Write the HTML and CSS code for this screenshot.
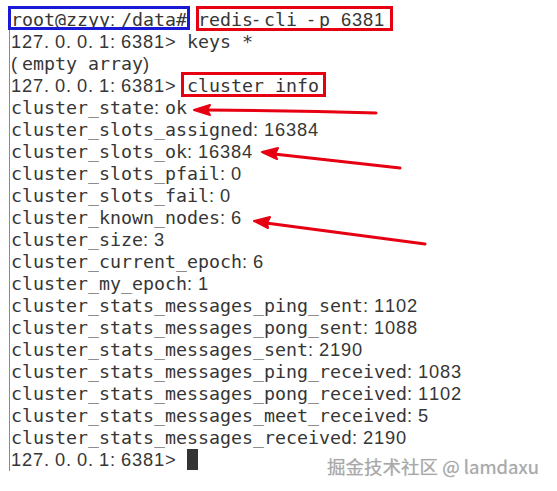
FILE: index.html
```html
<!DOCTYPE html>
<html lang="en">
<head>
<meta charset="utf-8">
<title>redis-cli cluster info</title>
<link rel="stylesheet" href="styles.css">
</head>
<body>
<div class="page">
  <div class="term">
    <div class="ln">root@zzyy:/data# redis-cli -p 6381</div>
    <div class="ln">127.0.0.1:6381&gt; keys *</div>
    <div class="ln">(empty array)</div>
    <div class="ln">127.0.0.1:6381&gt; cluster info</div>
    <div class="ln">cluster_state:ok</div>
    <div class="ln">cluster_slots_assigned:16384</div>
    <div class="ln">cluster_slots_ok:16384</div>
    <div class="ln">cluster_slots_pfail:0</div>
    <div class="ln">cluster_slots_fail:0</div>
    <div class="ln">cluster_known_nodes:6</div>
    <div class="ln">cluster_size:3</div>
    <div class="ln">cluster_current_epoch:6</div>
    <div class="ln">cluster_my_epoch:1</div>
    <div class="ln">cluster_stats_messages_ping_sent:1102</div>
    <div class="ln">cluster_stats_messages_pong_sent:1088</div>
    <div class="ln">cluster_stats_messages_sent:2190</div>
    <div class="ln">cluster_stats_messages_ping_received:1083</div>
    <div class="ln">cluster_stats_messages_pong_received:1102</div>
    <div class="ln">cluster_stats_messages_meet_received:5</div>
    <div class="ln">cluster_stats_messages_received:2190</div>
    <div class="ln last">127.0.0.1:6381&gt; </div>
  </div>

  <div class="mark mark-blue"></div>
  <div class="mark mark-red mark-cmd"></div>
  <div class="mark mark-red mark-info"></div>

  <svg class="arrows" width="557" height="491" viewBox="0 0 557 491" aria-hidden="true">
    <g class="arrow">
      <path d="M206 110 Q 300 111 376 113"/>
      <polygon points="194,110 210,105 207,110 210,115"/>
    </g>
    <g class="arrow">
      <path d="M274 154 L 400 168"/>
      <polygon points="262,152 278,148 275,154 277,159"/>
    </g>
    <g class="arrow">
      <path d="M266 223 L 425 244"/>
      <polygon points="254,221 270,217 267,223 268,228"/>
    </g>
  </svg>

  <div class="watermark">掘金技术社区 @ lamdaxu</div>
</div>
<script src="script.js"></script>
</body>
</html>
```

FILE: styles.css
```css
html, body {
  margin: 0;
  padding: 0;
  background: #ffffff;
}

.page {
  position: relative;
  width: 557px;
  height: 491px;
  overflow: hidden;
}

.term {
  margin: 7px 0 0 9px;
  padding: 2px 0 0 1px;
  border-left: 1px solid #8a8a8a;
  font-family: "DejaVu Sans Mono", monospace;
  font-size: 18.27px;
  line-height: 22px;
  color: #363636;
  width: 520px;
}

.ln {
  height: 22px;
  white-space: pre;
}

.p {
  display: inline-block;
  width: 11px;
  font-family: "Liberation Sans", sans-serif;
  text-align: left;
}

.cursor {
  display: inline-block;
  width: 11px;
  height: 21px;
  vertical-align: top;
  background: #333333;
}

.mark {
  position: absolute;
  box-sizing: border-box;
  border: 3px solid;
}

.mark-blue {
  left: 8px;
  top: 6px;
  width: 182px;
  height: 24px;
  border-color: #1a1ad6;
}

.mark-red {
  border-color: #e60012;
}

.mark-cmd {
  left: 196px;
  top: 6px;
  width: 197px;
  height: 25px;
}

.mark-info {
  left: 181px;
  top: 72px;
  width: 145px;
  height: 25px;
}

.arrows {
  position: absolute;
  left: 0;
  top: 0;
  pointer-events: none;
}

.arrow path {
  fill: none;
  stroke: #e60012;
  stroke-width: 3;
  stroke-linecap: round;
}

.arrow polygon {
  fill: #e60012;
  stroke: #e60012;
  stroke-width: 2;
  stroke-linejoin: round;
}

.watermark {
  position: absolute;
  left: 327px;
  top: 454px;
  font-family: "Noto Sans CJK SC", "Noto Sans", sans-serif;
  font-size: 18.5px;
  line-height: 24px;
  color: #a8a8a8;
  white-space: nowrap;
  text-shadow: 0 0 1px rgba(90, 90, 90, 0.3);
}
```

FILE: script.js
```js
(function () {
  var special = /[0-9.:\-()>]/;
  var lines = document.querySelectorAll('.term .ln');
  lines.forEach(function (el) {
    var text = el.textContent;
    el.textContent = '';
    for (var i = 0; i < text.length; i++) {
      var ch = text[i];
      if (special.test(ch)) {
        var s = document.createElement('span');
        s.className = 'p';
        s.textContent = ch;
        el.appendChild(s);
      } else {
        el.appendChild(document.createTextNode(ch));
      }
    }
    if (el.classList.contains('last')) {
      var c = document.createElement('span');
      c.className = 'cursor';
      el.appendChild(c);
    }
  });
})();
```
